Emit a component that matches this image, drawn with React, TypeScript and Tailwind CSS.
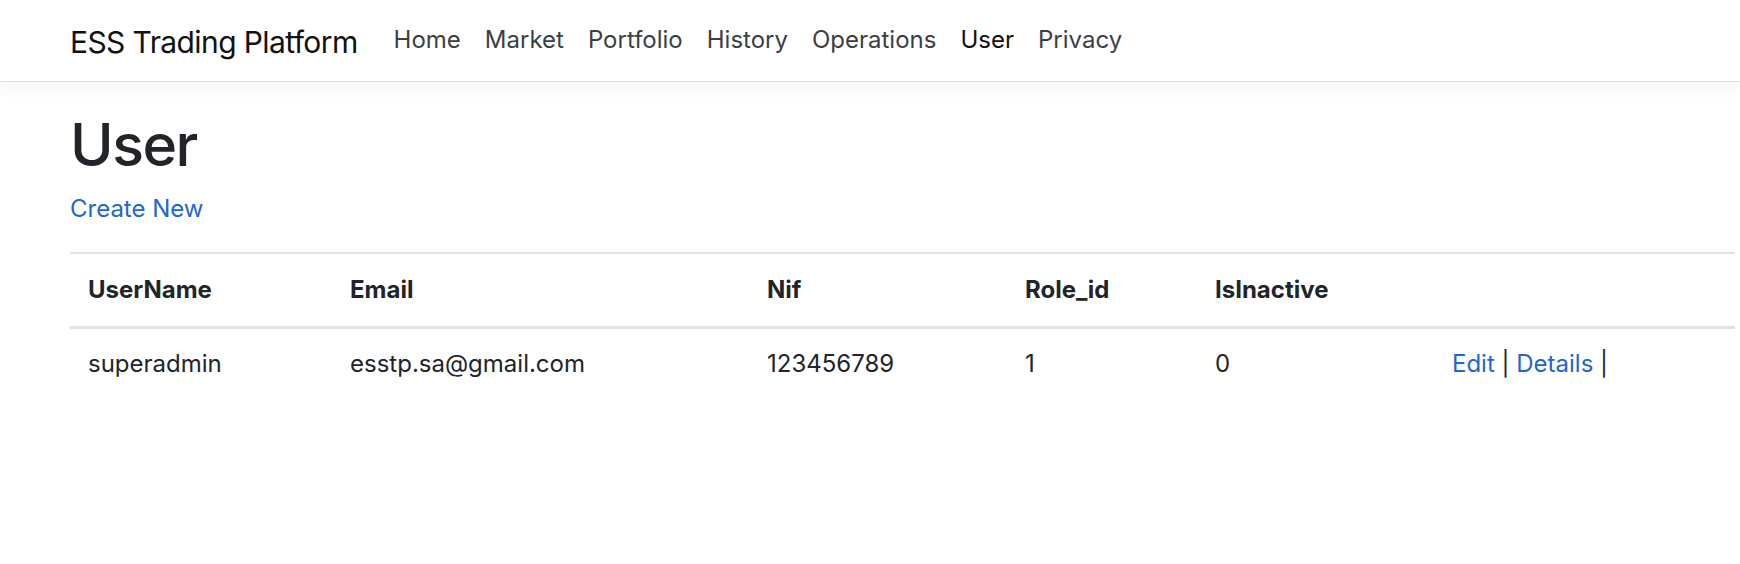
const navLinks = ['Home', 'Market', 'Portfolio', 'History', 'Operations', 'User', 'Privacy']

const users = [
  { userName: 'superadmin', email: 'esstp.sa@gmail.com', nif: '123456789', roleId: 1, isInactive: 0 },
]

export default function App() {
  return (
    <div className="min-h-[564px] bg-white text-[#212529] font-['Inter','Liberation_Sans',sans-serif]">
      {/* Navbar */}
      <header className="relative z-10 h-[82px] bg-white border-b border-[#dee2e6] shadow-[0_6px_18px_rgba(0,0,0,0.05)]">
        <nav className="flex items-center h-[81px] pl-[70px]">
          <a className="text-[30px] leading-[45px] tracking-[-0.6px] text-[#111] mr-[24px] pt-[3px]" href="#">ESS Trading Platform</a>
          <ul className="flex items-center">
            {navLinks.map((link) => (
              <li key={link}>
                <a
                  href="#"
                  className={`block px-[12px] text-[24px] leading-[36px] pb-[1px] ${link === 'User' ? 'text-[#111]' : 'text-[#3b3f44]'}`}
                >
                  {link}
                </a>
              </li>
            ))}
          </ul>
        </nav>
      </header>

      {/* Page */}
      <main className="pl-[70px] pr-[5px] pt-[27px]">
        <h1 className="text-[59px] leading-[71px] font-medium tracking-[-1.5px] mb-[11px]">User</h1>
        <p className="mb-[25px]">
          <a href="#" className="text-[24px] leading-[36px] text-[#1f66d5]">Create New</a>
        </p>

        <table className="w-[1665px] table-fixed border-collapse text-[24px] leading-[36px]">
          <thead>
            <tr className="border-t-2 border-[#dee2e6] border-b-[3px] border-b-[#dee2e6]">
              <th className="w-[262px] p-[18px] text-left font-bold">UserName</th>
              <th className="w-[417px] p-[18px] text-left font-bold">Email</th>
              <th className="w-[258px] p-[18px] text-left font-bold">Nif</th>
              <th className="w-[190px] p-[18px] text-left font-bold">Role_id</th>
              <th className="w-[237px] p-[18px] text-left font-bold">IsInactive</th>
              <th className="p-[18px]"></th>
            </tr>
          </thead>
          <tbody>
            {users.map((u) => (
              <tr key={u.userName}>
                <td className="px-[18px] pt-[17px] pb-[18px]">{u.userName}</td>
                <td className="px-[18px] pt-[17px] pb-[18px]">{u.email}</td>
                <td className="px-[18px] pt-[17px] pb-[18px]">{u.nif}</td>
                <td className="px-[18px] pt-[17px] pb-[18px]">{u.roleId}</td>
                <td className="px-[18px] pt-[17px] pb-[18px]">{u.isInactive}</td>
                <td className="px-[18px] pt-[17px] pb-[18px] whitespace-nowrap">
                  <a href="#" className="text-[#1f66d5]">Edit</a> |{' '}
                  <a href="#" className="text-[#1f66d5]">Details</a> |
                </td>
              </tr>
            ))}
          </tbody>
        </table>
      </main>
    </div>
  )
}
